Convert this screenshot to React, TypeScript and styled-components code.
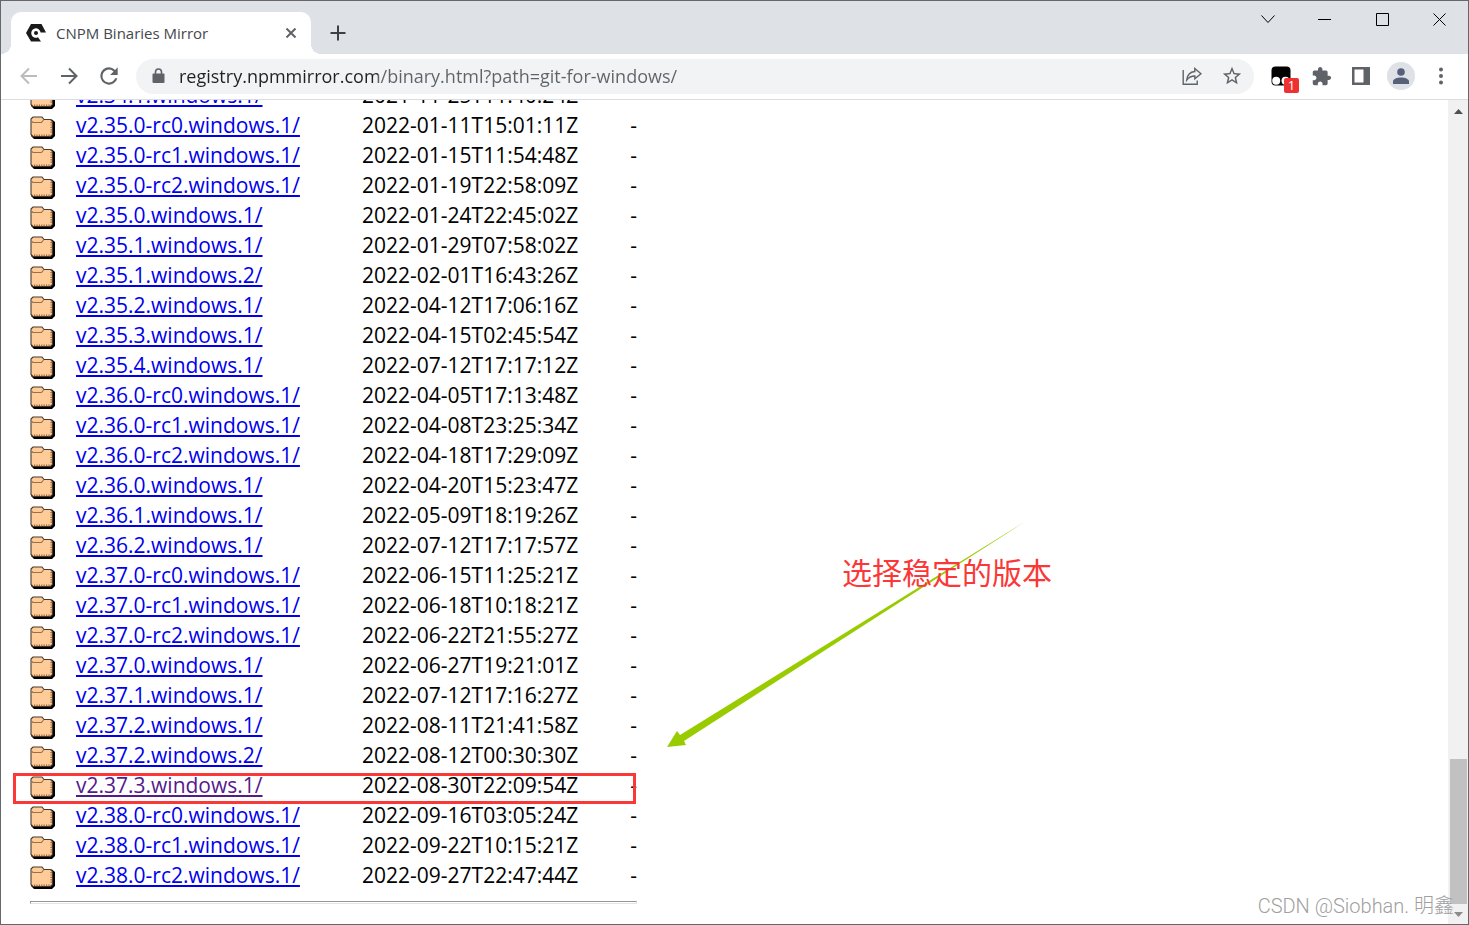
import React from "react";
import styled, { createGlobalStyle } from "styled-components";

const GlobalStyle = createGlobalStyle`
  *, *::before, *::after { box-sizing: border-box; }
  body {
    margin: 0;
    background: #ffffff;
    color: #000000;
    font-family: "Open Sans", "Noto Sans", "Noto Sans CJK SC", sans-serif;
  }
  button, input { font: inherit; border: 0; padding: 0; background: none; color: inherit; }
`;

const Window = styled.div`
  position: relative;
  display: flex;
  flex-direction: column;
  height: 100vh;
  overflow: hidden;
  border: 1px solid #66676a;
  background: #ffffff;
`;

const TabStrip = styled.header`
  display: flex;
  flex: none;
  align-items: flex-end;
  height: 53px;
  padding-left: 10px;
  background: #dee1e6;
`;

const Tab = styled.div`
  position: relative;
  display: flex;
  align-items: center;
  width: 300px;
  height: 42px;
  padding: 0 12px 0 15px;
  border-radius: 10px 10px 0 0;
  background: #ffffff;

  &::before, &::after {
    content: "";
    position: absolute;
    bottom: 0;
    width: 10px;
    height: 10px;
  }
  &::before {
    right: 100%;
    background: radial-gradient(circle at 0 0, transparent 10px, #ffffff 10px);
  }
  &::after {
    left: 100%;
    background: radial-gradient(circle at 100% 0, transparent 10px, #ffffff 10px);
  }
`;

const TabTitle = styled.span`
  flex: 1;
  padding-left: 10px;
  font-size: 15px;
  line-height: 20px;
  color: #45484c;
  white-space: nowrap;
`;

const IconButton = styled.button<{ $width?: number; $height?: number }>`
  display: flex;
  flex: none;
  align-items: center;
  justify-content: center;
  width: ${(p) => p.$width ?? 40}px;
  height: ${(p) => p.$height ?? 36}px;
  color: #5f6368;

  &:disabled { color: #babcbe; }
`;

const NewTab = styled.div`
  display: flex;
  flex: 1;
  padding-left: 10px;
  button { color: #3c4043; }
`;

const WindowControls = styled.div`
  display: flex;
  align-self: flex-start;
  button { color: #000000; }
`;

const Toolbar = styled.nav`
  display: flex;
  flex: none;
  align-items: center;
  height: 46px;
  padding: 0 7px 1px 8px;
  border-bottom: 1px solid #dadce0;
`;

const Omnibox = styled.form`
  display: flex;
  flex: 1;
  align-items: center;
  height: 35px;
  margin: 0 7px;
  padding: 0 2px 0 16px;
  border-radius: 18px;
  background: #f1f3f4;
`;

/* The host name is darker than the path that follows it. */
const Address = styled.input`
  flex: 1;
  min-width: 0;
  height: 30px;
  margin-left: 14px;
  outline: none;
  font-size: 18px;
  line-height: 30px;
  color: #5f6368;
  background: linear-gradient(90deg, #202124 199px, #5f6368 199px);
  -webkit-background-clip: text;
  background-clip: text;
  -webkit-text-fill-color: transparent;
`;

const Extension = styled(IconButton)`
  position: relative;
`;

const Badge = styled.span`
  position: absolute;
  right: 2px;
  bottom: 1px;
  width: 15px;
  height: 15px;
  border-radius: 2px;
  background: #ee3131;
  color: #ffffff;
  font-size: 13px;
  line-height: 15px;
  text-align: center;
`;

const Avatar = styled.span`
  display: flex;
  align-items: center;
  justify-content: center;
  width: 28px;
  height: 28px;
  border-radius: 50%;
  background: #dee1e6;
`;

const Viewport = styled.div`
  display: flex;
  flex: 1;
  min-height: 0;
`;

const Page = styled.main`
  display: flex;
  flex: 1;
  flex-direction: column;
  justify-content: flex-end;
  overflow: hidden;
  padding: 0 29px 20px;
`;

const Listing = styled.div`
  width: 607px;
`;

const FileTable = styled.table`
  width: 100%;
  border-collapse: collapse;
  table-layout: fixed;
  font-size: 21px;
  line-height: 28px;
`;

const FileRow = styled.tr`
  position: relative;
  height: 30px;
`;

const Marker = styled.span`
  position: absolute;
  inset: 2px 1px -3px -17px;
  border: 3px solid #fb3838;
  pointer-events: none;
`;

const Cell = styled.td<{ $align?: "right" }>`
  height: 30px;
  padding: 0;
  text-align: ${(p) => p.$align ?? "left"};
  vertical-align: top;
  white-space: nowrap;

  svg { display: block; margin-top: 5px; }
`;

const FileLink = styled.a<{ $visited: boolean }>`
  color: ${(p) => (p.$visited ? "#551a8b" : "#0000ee")};
  text-decoration: underline;
  text-decoration-thickness: 2px;
  text-underline-offset: 2px;
  text-decoration-skip-ink: none;
`;

const Rule = styled.hr`
  height: 3px;
  margin: 10px 0 0;
  border: 1px solid #e4e4e4;
  border-top-color: #959595;
  border-left-color: #959595;
`;

const Scrollbar = styled.div`
  display: flex;
  flex: none;
  flex-direction: column;
  align-items: center;
  width: 20px;
  background: #f1f1f1;
`;

const ScrollArrow = styled(IconButton)<{ $faded?: boolean }>`
  color: ${(p) => (p.$faded ? "#8c8c8c" : "#505050")};
`;

const ScrollTrack = styled.div`
  display: flex;
  flex: 1;
  flex-direction: column;
  justify-content: flex-end;
`;

const ScrollThumb = styled.div`
  width: 17px;
  height: 145px;
  background: #c1c1c1;
`;

const Arrow = styled.svg`
  position: absolute;
  top: 519px;
  left: 659px;
  pointer-events: none;
`;

const Note = styled.div`
  position: absolute;
  top: 550px;
  left: 841px;
  color: #fb3838;
  font-family: "Noto Sans CJK SC", sans-serif;
  font-size: 30px;
  line-height: 40px;
  white-space: nowrap;
`;

const Watermark = styled.div`
  position: absolute;
  right: 14px;
  bottom: 4px;
  color: #a0a0a0;
  font-family: Roboto, "Noto Sans CJK SC", sans-serif;
  font-size: 20px;
  font-weight: 300;
  line-height: 28px;
  white-space: nowrap;
`;

const files: [string, string][] = [
  ["v2.34.1.windows.1/", "2021-11-25T11:40:24Z"],
  ["v2.35.0-rc0.windows.1/", "2022-01-11T15:01:11Z"],
  ["v2.35.0-rc1.windows.1/", "2022-01-15T11:54:48Z"],
  ["v2.35.0-rc2.windows.1/", "2022-01-19T22:58:09Z"],
  ["v2.35.0.windows.1/", "2022-01-24T22:45:02Z"],
  ["v2.35.1.windows.1/", "2022-01-29T07:58:02Z"],
  ["v2.35.1.windows.2/", "2022-02-01T16:43:26Z"],
  ["v2.35.2.windows.1/", "2022-04-12T17:06:16Z"],
  ["v2.35.3.windows.1/", "2022-04-15T02:45:54Z"],
  ["v2.35.4.windows.1/", "2022-07-12T17:17:12Z"],
  ["v2.36.0-rc0.windows.1/", "2022-04-05T17:13:48Z"],
  ["v2.36.0-rc1.windows.1/", "2022-04-08T23:25:34Z"],
  ["v2.36.0-rc2.windows.1/", "2022-04-18T17:29:09Z"],
  ["v2.36.0.windows.1/", "2022-04-20T15:23:47Z"],
  ["v2.36.1.windows.1/", "2022-05-09T18:19:26Z"],
  ["v2.36.2.windows.1/", "2022-07-12T17:17:57Z"],
  ["v2.37.0-rc0.windows.1/", "2022-06-15T11:25:21Z"],
  ["v2.37.0-rc1.windows.1/", "2022-06-18T10:18:21Z"],
  ["v2.37.0-rc2.windows.1/", "2022-06-22T21:55:27Z"],
  ["v2.37.0.windows.1/", "2022-06-27T19:21:01Z"],
  ["v2.37.1.windows.1/", "2022-07-12T17:16:27Z"],
  ["v2.37.2.windows.1/", "2022-08-11T21:41:58Z"],
  ["v2.37.2.windows.2/", "2022-08-12T00:30:30Z"],
  ["v2.37.3.windows.1/", "2022-08-30T22:09:54Z"],
  ["v2.38.0-rc0.windows.1/", "2022-09-16T03:05:24Z"],
  ["v2.38.0-rc1.windows.1/", "2022-09-22T10:15:21Z"],
  ["v2.38.0-rc2.windows.1/", "2022-09-27T22:47:44Z"],
];

const STABLE = "v2.37.3.windows.1/";

const FolderIcon = () => (
  <svg width="25" height="23" viewBox="0 0 25 23" aria-hidden="true">
    <path d="M3 3.5H22L25 6V20L22 23H4L1 20Z" fill="#000" />
    <path d="M1 3L3 1H12L14 3.5H20.5L22.5 5.5V18.5L20.5 20.5H3L1 18.5Z" fill="#ffcc99" stroke="#4a3a2c" strokeWidth="1.1" />
    <path d="M1.5 5.2L3 6.5H11.5L13.5 4" fill="none" stroke="#99704a" strokeWidth="1.2" />
    <path d="M21.2 6V18M4 19.2H21" fill="none" stroke="#a06c3c" strokeWidth="1.6" strokeDasharray="1.2 1.2" />
  </svg>
);

const Favicon = () => (
  <svg width="20" height="18" viewBox="0 0 20 18" aria-hidden="true">
    <path d="M5 0H15.5L20 8.5H14.6A4.7 4.7 0 1 0 12 13.3L15 17.5H5L0 9Z" fill="#1b1b1d" />
    <circle cx="10" cy="9" r="2" fill="#1b1b1d" />
  </svg>
);

const Line = ({ d, size, width = 2 }: { d: string; size: number; width?: number }) => (
  <svg width={size} height={size} viewBox={`0 0 ${size} ${size}`} fill="none" stroke="currentColor" strokeWidth={width} aria-hidden="true">
    <path d={d} />
  </svg>
);

const Solid = ({ d, size = 20, box = 24 }: { d: string; size?: number; box?: number }) => (
  <svg width={size} height={size} viewBox={`0 0 ${box} ${box}`} fill="currentColor" aria-hidden="true">
    <path d={d} />
  </svg>
);

export default function App() {
  return (
    <Window>
      <GlobalStyle />
      <TabStrip>
        <Tab>
          <Favicon />
          <TabTitle>CNPM Binaries Mirror</TabTitle>
          <IconButton $width={16} $height={20} aria-label="Close tab">
            <Line size={10} d="M0.5 0.5L9.5 9.5M9.5 0.5L0.5 9.5" />
          </IconButton>
        </Tab>
        <NewTab>
          <IconButton $width={34} $height={42} aria-label="New tab">
            <Line size={16} width={2} d="M8 0.5V15.5M0.500 8H15.500" />
          </IconButton>
        </NewTab>
        <WindowControls>
          <IconButton $width={56} aria-label="Search tabs">
            <Line size={14} width={1} d="M0.5 3.5L7 10.5L13.5 3.5" />
          </IconButton>
          <IconButton $width={57} aria-label="Minimize">
            <Line size={13} width={1} d="M0 6.5H13" />
          </IconButton>
          <IconButton $width={58} aria-label="Maximize">
            <Line size={13} width={1} d="M0.5 0.5H12.5V12.5H0.5Z" />
          </IconButton>
          <IconButton $width={57} aria-label="Close window">
            <Line size={13} width={1} d="M0.5 0.5L12.5 12.5M12.5 0.5L0.5 12.5" />
          </IconButton>
        </WindowControls>
      </TabStrip>
      <Toolbar>
        <IconButton aria-label="Back" disabled>
          <Line size={18} d="M17 9H2M9 1.5L1.5 9L9 16.5" />
        </IconButton>
        <IconButton aria-label="Forward">
          <Line size={18} d="M1 9H16M9 1.5L16.5 9L9 16.5" />
        </IconButton>
        <IconButton aria-label="Reload">
          <Solid size={26} d="M17.65 6.35A7.96 7.96 0 0 0 12 4a8 8 0 1 0 7.73 10h-2.08A6 6 0 1 1 12 6c1.66 0 3.14.69 4.22 1.78L13 11h7V4z" />
        </IconButton>
        <Omnibox>
          <svg width="13" height="16" viewBox="0 0 13 16" aria-hidden="true">
            <path d="M1.5 5.5H11.5Q12.5 5.5 12.5 6.5V14Q12.5 15 11.5 15H1.5Q.5 15 .5 14V6.5Q.5 5.5 1.5 5.5Z" fill="#5f6368" />
            <path d="M3.5 6V4A3 3 0 0 1 9.500 4V6" fill="none" stroke="#5f6368" strokeWidth="1.6" />
          </svg>
          <Address
            aria-label="Address"
            defaultValue="registry.npmmirror.com/binary.html?path=git-for-windows/"
            spellCheck={false}
          />
          <IconButton type="button" aria-label="Share">
            <svg width="20" height="20" viewBox="0 0 20 20" fill="none" stroke="currentColor" strokeWidth="1.4" aria-hidden="true">
              <path d="M1.200 4V18.200H15.200V14.500" />
              <path d="M12.800 2.500L19 7.700L12.800 12.800V10C9.500 10 7 11 4.700 14C5.200 9.500 7.500 6 12.800 5.500Z" />
            </svg>
          </IconButton>
          <IconButton type="button" aria-label="Bookmark">
            <Solid
              size={22}
              d="M22 9.240l-7.190-.620L12 2 9.190 8.630 2 9.240l5.460 4.730L5.820 21 12 17.270 18.180 21l-1.630-7.030L22 9.240zM12 15.400l-3.760 2.270 1-4.280-3.320-2.880 4.380-.380L12 6.100l1.710 4.040 4.380.380-3.320 2.880 1 4.280L12 15.400z"
            />
          </IconButton>
        </Omnibox>
        <Extension aria-label="Extension, 1 item">
          <svg width="20" height="20" viewBox="0 0 20 20" aria-hidden="true">
            <rect x="0.500" y="0.500" width="19" height="19" rx="4" fill="#000" />
            <circle cx="5.200" cy="14.800" r="4" fill="#fff" />
            <circle cx="14.500" cy="14.800" r="4" fill="#fff" />
          </svg>
          <Badge>1</Badge>
        </Extension>
        <IconButton aria-label="Extensions">
          <Solid
            size={21}
            d="M20.500 11H19V7c0-1.100-.9-2-2-2h-4V3.500C13 2.120 11.880 1 10.500 1S8 2.120 8 3.500V5H4c-1.100 0-1.990.9-1.990 2v3.800H3.500c1.490 0 2.700 1.210 2.700 2.700s-1.210 2.700-2.700 2.700H2V20c0 1.100.9 2 2 2h3.800v-1.500c0-1.490 1.210-2.700 2.700-2.700 1.490 0 2.700 1.210 2.700 2.700V22H17c1.100 0 2-.9 2-2v-4h1.500c1.380 0 2.500-1.120 2.500-2.500S21.880 11 20.500 11z"
          />
        </IconButton>
        <IconButton aria-label="Side panel">
          <svg width="18" height="18" viewBox="0 0 18 18" aria-hidden="true">
            <path d="M0 0H18V18H0ZM2.500 2.500V15.500H11.500V2.500Z" fill="currentColor" fillRule="evenodd" />
          </svg>
        </IconButton>
        <IconButton aria-label="Profile">
          <Avatar>
            <svg width="16" height="16" viewBox="0 0 16 16" fill="#566078" aria-hidden="true">
              <circle cx="8" cy="4" r="3.800" />
              <path d="M0 16V13.500C0 11 4 9.500 8 9.500S16 11 16 13.500V16Z" />
            </svg>
          </Avatar>
        </IconButton>
        <IconButton aria-label="Menu">
          <svg width="4" height="18" viewBox="0 0 4 18" fill="currentColor" aria-hidden="true">
            <circle cx="2" cy="2.500" r="2" />
            <circle cx="2" cy="9" r="2" />
            <circle cx="2" cy="15.500" r="2" />
          </svg>
        </IconButton>
      </Toolbar>
      <Viewport>
        <Page>
          <Listing>
            <FileTable>
              <colgroup>
                <col width="46" />
                <col width="286" />
                <col width="235" />
                <col />
              </colgroup>
              <tbody>
                {files.map(([name, date]) => (
                  <FileRow key={name}>
                    <Cell>
                      <FolderIcon />
                      {name === STABLE && <Marker />}
                    </Cell>
                    <Cell>
                      <FileLink href={`#${name}`} $visited={name === STABLE}>
                        {name}
                      </FileLink>
                    </Cell>
                    <Cell>{date}</Cell>
                    <Cell $align="right">-</Cell>
                  </FileRow>
                ))}
              </tbody>
            </FileTable>
            <Rule />
          </Listing>
        </Page>
        <Scrollbar>
          <ScrollArrow $width={20} $height={22} aria-label="Scroll up">
            <Solid size={9} box={9} d="M0 7L4.500 2L9 7Z" />
          </ScrollArrow>
          <ScrollTrack>
            <ScrollThumb />
          </ScrollTrack>
          <ScrollArrow $width={20} $height={20} $faded aria-label="Scroll down">
            <Solid size={9} box={9} d="M0 2L4.500 7L9 2Z" />
          </ScrollArrow>
        </Scrollbar>
      </Viewport>
      <Arrow width="370" height="230" viewBox="660 520 370 230" aria-hidden="true">
        <path d="M1026 521L684 741L686 745L667 747L677 731L680 735Z" fill="#99cc00" />
      </Arrow>
      <Note>选择稳定的版本</Note>
      <Watermark>CSDN @Siobhan. 明鑫</Watermark>
    </Window>
  );
}
